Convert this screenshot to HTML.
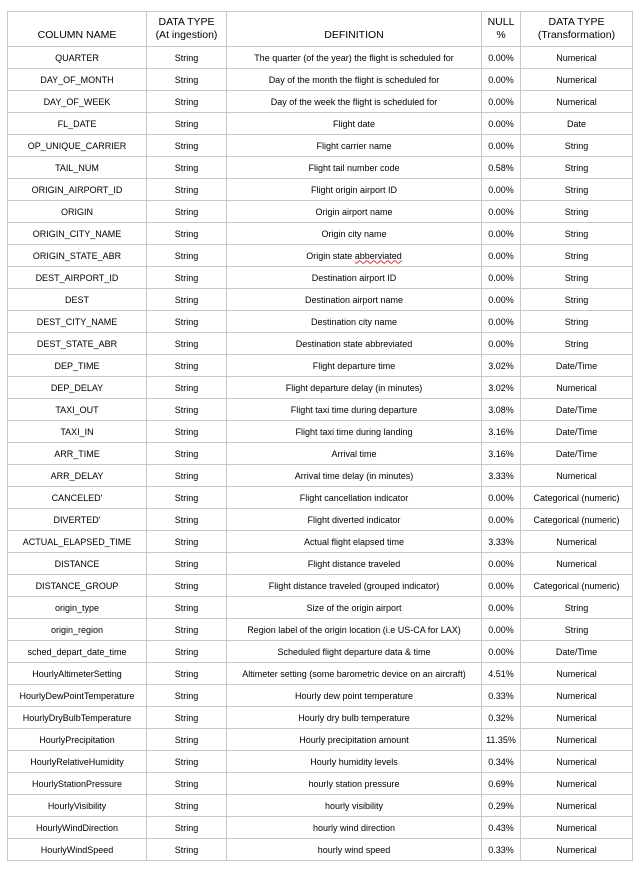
<!DOCTYPE html>
<html><head><meta charset="utf-8"><style>
body{margin:0;background:#fff;width:642px;height:870px;overflow:hidden;font-family:"Liberation Sans",Arial,sans-serif;color:#000}
table{position:absolute;left:7px;top:11px;border-collapse:collapse;table-layout:fixed}
td{border:1px solid #c8c8c8;text-align:center;font-size:9px;height:21px;padding:0;white-space:nowrap;overflow:hidden}
tr.h td{font-size:10.5px;height:30px;vertical-align:bottom;padding-bottom:4px;line-height:13px}
</style></head><body>
<table>
<colgroup><col style="width:139px"><col style="width:80px"><col style="width:255px"><col style="width:39px"><col style="width:112px"></colgroup>
<tr class="h"><td>COLUMN NAME</td><td>DATA TYPE<br>(At ingestion)</td><td>DEFINITION</td><td>NULL<br>%</td><td>DATA TYPE<br>(Transformation)</td></tr>
<tr><td>QUARTER</td><td>String</td><td>The quarter (of the year) the flight is scheduled for</td><td>0.00%</td><td>Numerical</td></tr>
<tr><td>DAY_OF_MONTH</td><td>String</td><td>Day of the month the flight is scheduled for</td><td>0.00%</td><td>Numerical</td></tr>
<tr><td>DAY_OF_WEEK</td><td>String</td><td>Day of the week the flight is scheduled for</td><td>0.00%</td><td>Numerical</td></tr>
<tr><td>FL_DATE</td><td>String</td><td>Flight date</td><td>0.00%</td><td>Date</td></tr>
<tr><td>OP_UNIQUE_CARRIER</td><td>String</td><td>Flight carrier name</td><td>0.00%</td><td>String</td></tr>
<tr><td>TAIL_NUM</td><td>String</td><td>Flight tail number code</td><td>0.58%</td><td>String</td></tr>
<tr><td>ORIGIN_AIRPORT_ID</td><td>String</td><td>Flight origin airport ID</td><td>0.00%</td><td>String</td></tr>
<tr><td>ORIGIN</td><td>String</td><td>Origin airport name</td><td>0.00%</td><td>String</td></tr>
<tr><td>ORIGIN_CITY_NAME</td><td>String</td><td>Origin city name</td><td>0.00%</td><td>String</td></tr>
<tr><td>ORIGIN_STATE_ABR</td><td>String</td><td>Origin state <span style="text-decoration:underline wavy #d33">abberviated</span></td><td>0.00%</td><td>String</td></tr>
<tr><td>DEST_AIRPORT_ID</td><td>String</td><td>Destination airport ID</td><td>0.00%</td><td>String</td></tr>
<tr><td>DEST</td><td>String</td><td>Destination airport name</td><td>0.00%</td><td>String</td></tr>
<tr><td>DEST_CITY_NAME</td><td>String</td><td>Destination city name</td><td>0.00%</td><td>String</td></tr>
<tr><td>DEST_STATE_ABR</td><td>String</td><td>Destination state abbreviated</td><td>0.00%</td><td>String</td></tr>
<tr><td>DEP_TIME</td><td>String</td><td>Flight departure time</td><td>3.02%</td><td>Date/Time</td></tr>
<tr><td>DEP_DELAY</td><td>String</td><td>Flight departure delay (in minutes)</td><td>3.02%</td><td>Numerical</td></tr>
<tr><td>TAXI_OUT</td><td>String</td><td>Flight taxi time during departure</td><td>3.08%</td><td>Date/Time</td></tr>
<tr><td>TAXI_IN</td><td>String</td><td>Flight taxi time during landing</td><td>3.16%</td><td>Date/Time</td></tr>
<tr><td>ARR_TIME</td><td>String</td><td>Arrival time</td><td>3.16%</td><td>Date/Time</td></tr>
<tr><td>ARR_DELAY</td><td>String</td><td>Arrival time delay (in minutes)</td><td>3.33%</td><td>Numerical</td></tr>
<tr><td>CANCELED'</td><td>String</td><td>Flight cancellation indicator</td><td>0.00%</td><td>Categorical (numeric)</td></tr>
<tr><td>DIVERTED'</td><td>String</td><td>Flight diverted indicator</td><td>0.00%</td><td>Categorical (numeric)</td></tr>
<tr><td>ACTUAL_ELAPSED_TIME</td><td>String</td><td>Actual flight elapsed time</td><td>3.33%</td><td>Numerical</td></tr>
<tr><td>DISTANCE</td><td>String</td><td>Flight distance traveled</td><td>0.00%</td><td>Numerical</td></tr>
<tr><td>DISTANCE_GROUP</td><td>String</td><td>Flight distance traveled (grouped indicator)</td><td>0.00%</td><td>Categorical (numeric)</td></tr>
<tr><td>origin_type</td><td>String</td><td>Size of the origin airport</td><td>0.00%</td><td>String</td></tr>
<tr><td>origin_region</td><td>String</td><td>Region label of the origin location (i.e US-CA for LAX)</td><td>0.00%</td><td>String</td></tr>
<tr><td>sched_depart_date_time</td><td>String</td><td>Scheduled flight departure data &amp; time</td><td>0.00%</td><td>Date/Time</td></tr>
<tr><td>HourlyAltimeterSetting</td><td>String</td><td>Altimeter setting (some barometric device on an aircraft)</td><td>4.51%</td><td>Numerical</td></tr>
<tr><td>HourlyDewPointTemperature</td><td>String</td><td>Hourly dew point temperature</td><td>0.33%</td><td>Numerical</td></tr>
<tr><td>HourlyDryBulbTemperature</td><td>String</td><td>Hourly dry bulb temperature</td><td>0.32%</td><td>Numerical</td></tr>
<tr><td>HourlyPrecipitation</td><td>String</td><td>Hourly precipitation amount</td><td>11.35%</td><td>Numerical</td></tr>
<tr><td>HourlyRelativeHumidity</td><td>String</td><td>Hourly humidity levels</td><td>0.34%</td><td>Numerical</td></tr>
<tr><td>HourlyStationPressure</td><td>String</td><td>hourly station pressure</td><td>0.69%</td><td>Numerical</td></tr>
<tr><td>HourlyVisibility</td><td>String</td><td>hourly visibility</td><td>0.29%</td><td>Numerical</td></tr>
<tr><td>HourlyWindDirection</td><td>String</td><td>hourly wind direction</td><td>0.43%</td><td>Numerical</td></tr>
<tr><td>HourlyWindSpeed</td><td>String</td><td>hourly wind speed</td><td>0.33%</td><td>Numerical</td></tr>
</table>
</body></html>
